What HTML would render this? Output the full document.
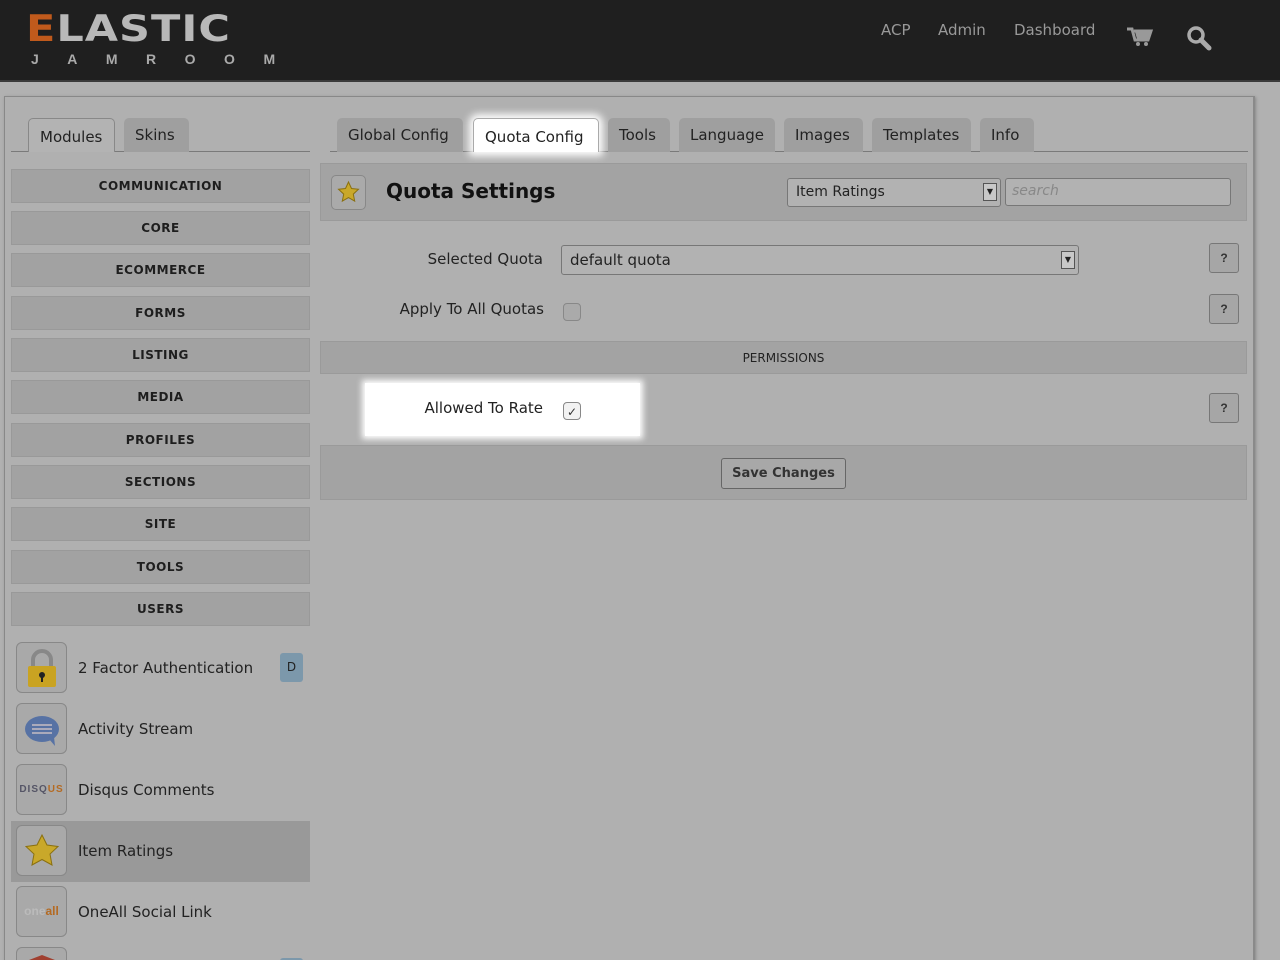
<!DOCTYPE html>
<html style="overflow:hidden"><head><meta charset="utf-8"><style>
*{box-sizing:border-box;margin:0;padding:0}
html,body{width:1280px;height:960px;overflow:hidden}
body{background:#b1b1b1;font-family:"DejaVu Sans","Liberation Sans",sans-serif;color:#222;position:relative}
.hdr{position:absolute;left:0;top:0;width:1280px;height:82px;background:#1f1f1f;border-bottom:2px solid #3a3a3a}
.logo{position:absolute;left:26px;top:8px;font:bold 43px "DejaVu Sans",sans-serif;color:#b8b8b8;letter-spacing:1px;transform:scaleY(0.85);transform-origin:left top}
.logo span{color:#c05a1c}
.jam{position:absolute;left:31px;top:51px;font:bold 14px "Liberation Sans",sans-serif;color:#aaa;letter-spacing:28.5px}
.nav{position:absolute;top:21px;font-size:15px;color:#999}
.wrap{position:absolute;left:4px;top:96px;width:1251px;height:900px;border:1px solid #888;border-right:2px solid #8a8a8a;background:#b0b0b0;box-shadow:1px 1px 3px #888}
.tab{position:absolute;top:118px;height:34px;background:#9f9f9f;border-radius:5px 5px 0 0;font-size:15px;color:#222;padding:8px 11px 0}
.tab.on{background:#b3b3b3;border:1px solid #888;border-bottom:none}
.tab.white{background:#fff;box-shadow:0 0 8px 4px #fff;border:1px solid #aaa;border-bottom:none}
.line{position:absolute;top:151px;height:1px;background:#7a7a7a}
.sb{position:absolute;left:11px;width:299px;height:34px;background:#a2a2a2;border:1px solid #999;font:bold 12px "DejaVu Sans",sans-serif;text-align:center;line-height:33px;letter-spacing:.5px;color:#1e1e1e}
.mod{position:absolute;left:11px;width:299px;height:61px}
.ic{position:absolute;left:5px;top:4px;width:51px;height:51px;border:1px solid #888;border-radius:6px;background:#a9a9a9}
.mod .t{position:absolute;left:67px;top:21px;font-size:15px;color:#222}
.panel{position:absolute;left:320px;width:927px;background:#a3a3a3;border:1px solid #9a9a9a}
.lbl{position:absolute;font-size:15px;color:#222;text-align:right}
.q{position:absolute;left:1209px;width:30px;height:30px;border:1px solid #777;border-radius:3px;background:#a6a6a6;font:bold 12px sans-serif;text-align:center;line-height:28px;color:#333}
.sel{position:absolute;height:30px;background:#b2b2b2;border:1px solid #777;border-radius:3px;font-size:15px;padding:5px 8px}
.arr{position:absolute;right:3px;top:5px;width:14px;height:18px;background:#c8c8c8;border:1px solid #555;font-size:8px;text-align:center;line-height:16px}
.cb{position:absolute;width:18px;height:18px;border:1px solid #888;border-radius:4px;background:#aaa}
</style></head><body>
<div class="hdr">
<div class="logo"><span>E</span>LASTIC</div>
<div class="jam">JAMROOM</div>
<div class="nav" style="left:881px">ACP</div>
<div class="nav" style="left:938px">Admin</div>
<div class="nav" style="left:1014px">Dashboard</div>
<svg style="position:absolute;left:1126px;top:26px" width="28" height="22" viewBox="0 0 28 22"><path d="M1 3h5l3 11h13l3-9H8" fill="none" stroke="#999" stroke-width="3"/><path d="M9 6h15l-3 7H11z" fill="#999"/><circle cx="12" cy="18" r="2" fill="#999"/><circle cx="20" cy="18" r="2" fill="#999"/></svg>
<svg style="position:absolute;left:1186px;top:25px" width="26" height="26" viewBox="0 0 26 26"><circle cx="10" cy="10" r="7" fill="none" stroke="#aaa" stroke-width="3.5"/><path d="M15 15l8 8" stroke="#aaa" stroke-width="5" stroke-linecap="round"/></svg>
</div>
<div class="wrap"></div>
<div class="line" style="left:11px;width:299px"></div>
<div class="line" style="left:330px;width:918px"></div>
<div class="tab on" style="left:28px;width:87px;padding-top:9px">Modules</div>
<div class="tab" style="left:124px;width:65px">Skins</div>
<div class="tab" style="left:337px;width:126px">Global Config</div>
<div class="tab white" style="left:473px;width:126px;padding-top:9px">Quota Config</div>
<div class="tab" style="left:608px;width:62px">Tools</div>
<div class="tab" style="left:679px;width:96px">Language</div>
<div class="tab" style="left:784px;width:79px">Images</div>
<div class="tab" style="left:872px;width:99px">Templates</div>
<div class="tab" style="left:980px;width:54px">Info</div>

<div class="sb" style="top:169px">COMMUNICATION</div>
<div class="sb" style="top:211px">CORE</div>
<div class="sb" style="top:253px">ECOMMERCE</div>
<div class="sb" style="top:296px">FORMS</div>
<div class="sb" style="top:338px">LISTING</div>
<div class="sb" style="top:380px">MEDIA</div>
<div class="sb" style="top:423px">PROFILES</div>
<div class="sb" style="top:465px">SECTIONS</div>
<div class="sb" style="top:507px">SITE</div>
<div class="sb" style="top:550px">TOOLS</div>
<div class="sb" style="top:592px">USERS</div>

<div class="mod" style="top:638px"><div class="ic"><svg width="51" height="51" viewBox="0 0 51 51"><path d="M16 24v-7a9 9 0 0 1 18 0v7" fill="none" stroke="#888" stroke-width="4"/><rect x="11" y="23" width="28" height="21" rx="2" fill="#c9a322"/><circle cx="25" cy="32" r="3" fill="#222"/><rect x="24" y="33" width="2" height="6" fill="#222"/></svg></div><div class="t">2 Factor Authentication</div><div style="position:absolute;left:269px;top:15px;width:23px;height:29px;background:#7c98ab;border-radius:3px;font-size:12px;text-align:center;line-height:29px">D</div></div>
<div class="mod" style="top:699px"><div class="ic"><svg width="51" height="51" viewBox="0 0 51 51"><ellipse cx="25" cy="25" rx="17" ry="13" fill="#5772a4"/><path d="M32 35l6 7-1-9z" fill="#5772a4"/><path d="M15 21h20M15 25h20M15 29h20" stroke="#aab" stroke-width="2"/></svg></div><div class="t">Activity Stream</div></div>
<div class="mod" style="top:760px"><div class="ic" style="font:bold 10px sans-serif;line-height:49px;text-align:center;color:#556;letter-spacing:1px">DISQ<span style="color:#b46a22">US</span></div><div class="t">Disqus Comments</div></div>
<div class="mod" style="top:821px;background:#999"><div class="ic"><svg width="51" height="51" viewBox="0 0 51 51"><path d="M25 9l5 10 11 1.5-8 7.5 2 11-10-5.5-10 5.5 2-11-8-7.5 11-1.5z" fill="#c9a82a" stroke="#8a7010"/></svg></div><div class="t">Item Ratings</div></div>
<div class="mod" style="top:882px"><div class="ic" style="font:bold 12px sans-serif;line-height:49px;text-align:center;color:#bbb">one<span style="color:#b46a22">all</span></div><div class="t">OneAll Social Link</div></div>
<div class="mod" style="top:943px"><div class="ic" style="background:#a9a9a9"><svg width="51" height="51" viewBox="0 0 51 51"><path d="M12 12l13-5 13 5v10H12z" fill="#a04030"/></svg></div><div style="position:absolute;left:269px;top:15px;width:23px;height:29px;background:#7c98ab;border-radius:3px"></div></div>

<div class="panel" style="top:163px;height:58px"></div>
<div style="position:absolute;left:331px;top:175px;width:35px;height:35px;border:1px solid #888;border-radius:5px;background:#aaa"><svg width="33" height="33" viewBox="0 0 33 33"><path d="M16.5 6l3 6.5 7 .8-5.2 4.8 1.4 7-6.2-3.5-6.2 3.5 1.4-7-5.2-4.8 7-.8z" fill="#c9a82a" stroke="#8a7010"/></svg></div>
<div style="position:absolute;left:386px;top:179px;font:bold 20px 'DejaVu Sans',sans-serif;color:#111">Quota Settings</div>
<div class="sel" style="left:787px;top:178px;width:214px;height:29px;font-size:14px;padding:5px 8px">Item Ratings<div class="arr" style="top:4px">▼</div></div>
<div class="sel" style="left:1005px;top:178px;width:226px;height:28px;font-style:italic;color:#888;font-size:14px;padding:4px 6px">search</div>

<div class="lbl" style="left:380px;width:163px;top:250px">Selected Quota</div>
<div class="sel" style="left:561px;top:245px;width:518px">default quota<div class="arr">▼</div></div>
<div class="q" style="top:243px">?</div>
<div class="lbl" style="left:360px;width:184px;top:300px">Apply To All Quotas</div>
<div class="cb" style="left:563px;top:303px"></div>
<div class="q" style="top:294px">?</div>
<div class="panel" style="top:341px;height:33px;font-size:12px;text-align:center;line-height:32px;color:#222">PERMISSIONS</div>
<div style="position:absolute;left:365px;top:383px;width:275px;height:53px;background:#fff;box-shadow:0 0 6px 3px #fff"></div>
<div class="lbl" style="left:380px;width:163px;top:399px">Allowed To Rate</div>
<div class="cb" style="left:563px;top:402px;background:#f2f2f2;font-size:12px;text-align:center;line-height:18px;color:#333">✓</div>
<div class="q" style="top:393px">?</div>
<div class="panel" style="top:445px;height:55px"></div>
<div style="position:absolute;left:721px;top:458px;width:125px;height:31px;border:1px solid #666;border-radius:3px;background:#a8a8a8;font:bold 13px 'DejaVu Sans',sans-serif;text-align:center;line-height:29px;color:#333">Save Changes</div>
</body></html>
